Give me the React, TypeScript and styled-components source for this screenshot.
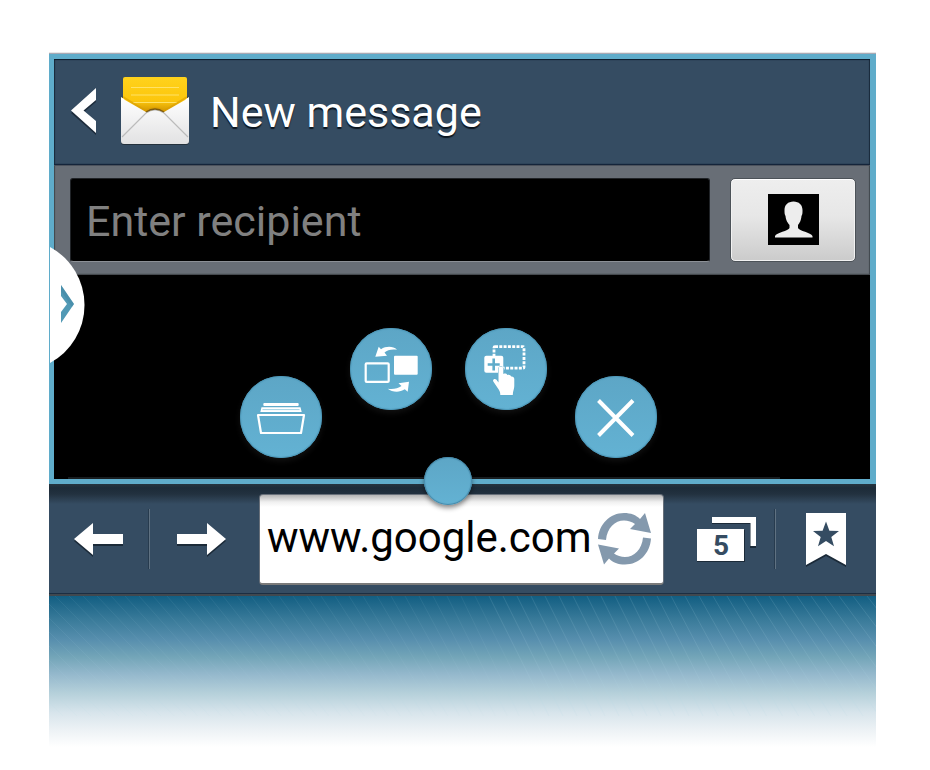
import React from "react";
import styled, { createGlobalStyle } from "styled-components";

const GlobalStyle = createGlobalStyle`
  *, *::before, *::after { box-sizing: border-box; }
  body { margin: 0; background: #fff; font-family: Roboto, "Liberation Sans", sans-serif; }
  button, input { font: inherit; color: inherit; }
`;

const Screen = styled.main`
  padding: 52px 54px 16px 49px;
`;

const AppWindow = styled.section`
  position: relative;
  border: 5px solid #5facca;
  border-right-width: 6px;
  background: #000;
  box-shadow: 0 -1px 0 #a9a9b4, 0 -2px 0 #e8e8e8;
  margin-top: 2px;
`;

const TitleBar = styled.header`
  display: flex;
  align-items: center;
  height: 106px;
  padding: 0 17px 2px;
  background: #354c62;
  border-bottom: 1px solid #14243a;
  box-shadow: inset 0 1px 1px #0b1a28, inset 1px 0 1px #1a2c3d, inset -1px 0 1px #1a2c3d;
`;

const PlainButton = styled.button`
  display: flex;
  align-items: center;
  justify-content: center;
  padding: 0;
  border: 0;
  background: none;
  cursor: pointer;

  svg { display: block; }
`;

const BackButton = styled(PlainButton)`
  margin-right: 24px;
`;

const Title = styled.h1`
  margin: 0 0 0 21px;
  padding-top: 2px;
  font-size: 43px;
  line-height: 52px;
  font-weight: 400;
  color: #fff;
  text-shadow: 0 2px 1px #0c1620;
  white-space: nowrap;
`;

const RecipientBar = styled.div`
  display: flex;
  gap: 20px;
  height: 110px;
  padding: 13px 14px 12px 16px;
  background: #686e76;
  box-shadow: inset 0 1px 0 #4c525c, inset 1px 0 1px #40464d, inset -1px 0 1px #40464d;
  border-bottom: 1px solid #45494e;
`;

const RecipientInput = styled.input`
  flex: 1;
  min-width: 0;
  padding: 2px 15px 0;
  border: 1px solid #202327;
  border-bottom: 1px solid #8c9096;
  border-radius: 3px;
  background: #000;
  color: #fff;
  font-size: 43px;
  outline: none;

  &::placeholder { color: #808080; opacity: 1; }
`;

const ContactButton = styled(PlainButton)`
  flex: 0 0 126px;
  padding-bottom: 2px;
  border: 1px solid #4c5258;
  border-radius: 5px;
  background: linear-gradient(#eeeeee, #e7e7e7 45%, #cbcbcb);
  box-shadow: inset 0 1px 0 #fff, inset 0 0 0 1px #f2f2f2;
`;

const MessageArea = styled.div`
  height: 204px;
  padding: 53px 27px 0 0;
`;

const ActionArc = styled.div`
  display: flex;
  justify-content: center;
  gap: 33px;
  height: 130px;
`;

const ArcHalf = styled.div`
  display: flex;
  gap: 28px;
`;

const RoundButton = styled(PlainButton)<{ $low?: boolean }>`
  width: 82px;
  height: 82px;
  border-radius: 50%;
  align-self: ${(p) => (p.$low ? "flex-end" : "flex-start")};
  background: linear-gradient(#5da6c6, #63b2d3);
  box-shadow: inset 0 0 1px 1px #4d98b9, 0 3px 6px rgba(90, 90, 90, 0.2);
`;

const FooterRule = styled.div`
  height: 2px;
  margin: 19px 63px 0 14px;
  background: #181d20;
`;

const DrawerHandle = styled(PlainButton)`
  position: absolute;
  left: -4px;
  top: 188px;
`;

const SplitKnob = styled.button`
  position: absolute;
  bottom: -26px;
  left: calc(50% - 14px);
  transform: translateX(-50%);
  width: 48px;
  height: 48px;
  padding: 0;
  border: 0;
  border-radius: 50%;
  background: linear-gradient(#5da6c6, #63b2d3);
  box-shadow: inset 0 0 1px 1px #4588a8, 0 3px 5px rgba(0, 0, 0, 0.45);
  z-index: 1;
  cursor: ns-resize;
`;

const BrowserBar = styled.nav`
  display: flex;
  align-items: stretch;
  height: 112px;
  background: linear-gradient(#26343f 0, #1c2b38 4px, #22313f 10px, #354c62 20px);
  border-bottom: 2px solid #40484f;
  box-shadow: inset 0 -1px 0 #1c2e42;
`;

const NavButton = styled(PlainButton)<{ $width: number; $shift?: "left" | "right" }>`
  flex: 0 0 ${(p) => p.$width}px;
  padding: ${(p) => (p.$shift === "left" ? "2px 6px 0 0" : p.$shift === "right" ? "2px 0 0 16px" : "2px 0 0")};
`;

const Separator = styled.span`
  flex: 0 0 2px;
  margin: 25px 0;
  border-left: 1px solid #273b4e;
  border-right: 1px solid #5f7181;
`;

const AddressField = styled.div`
  flex: 1;
  min-width: 0;
  display: flex;
  align-items: center;
  margin: 10px 0 9px;
  padding: 0 12px 0 7px;
  border: 1px solid #68707a;
  border-bottom: 2px solid #7b7b7b;
  border-radius: 4px;
  background: linear-gradient(#b4b4b4 0, #f0f0f0 7px, #fff 12px);
`;

const AddressInput = styled.input`
  flex: 1;
  min-width: 0;
  padding: 0 0 4px;
  border: 0;
  background: none;
  color: #000;
  font-size: 42px;
  outline: none;
`;

const PageBackdrop = styled.div`
  height: 154px;
  overflow: hidden;
  background: linear-gradient(
    #125e82 0, #3a7b9a 24px, #588fae 44px, #73a5b8 61px, #94b8cc 78px,
    #b5d0da 97px, #d8e5ec 117px, #edf2f5 134px, #fff 151px
  );

  svg { display: block; width: 100%; height: 100%; }
`;

const streaks = Array.from({ length: 70 }, (_, i) => {
  const x = -120 + i * 14;
  const slope = x < 420 ? 1 - Math.max(x, 0) / 800 : 0.5 + Math.max(x - 600, 0) / 800;
  return { x, end: x + slope * 120, opacity: x > 430 ? 0.14 : 0.08 };
});

function Chevron() {
  return (
    <svg width="26" height="50" viewBox="0 0 26 50">
      <path d="M25 5V16L12 27L25 38V49L0 27Z" fill="#14202c" opacity=".7" />
      <path d="M25 2V14L12.500 24.500L25 35V47L0 24.500Z" fill="#fff" />
    </svg>
  );
}

function Envelope() {
  return (
    <svg width="68" height="70" viewBox="0 0 68 70">
      <defs>
        <linearGradient id="paper" x1="0" y1="0" x2="0" y2="1">
          <stop offset="0" stopColor="#ffd21c" />
          <stop offset=".65" stopColor="#fcc60c" />
          <stop offset="1" stopColor="#c98b00" />
        </linearGradient>
        <linearGradient id="cover" x1="0" y1="0" x2="0" y2="1">
          <stop offset="0" stopColor="#fff" />
          <stop offset="1" stopColor="#e2e2e3" />
        </linearGradient>
      </defs>
      <path d="M0 22L3 20H65L68 22V66Q68 69 65 69H3Q0 69 0 66Z" fill="#24313c" />
      <path d="M2 3Q2 1 4 1H64Q66 1 66 3V38H2Z" fill="url(#paper)" />
      <path d="M10 11.500H58M10 19H58M12 26.500H56" stroke="#ffe267" strokeWidth="1" />
      <path d="M2 21L25 35Q34 29 43 35L66 21" fill="none" stroke="#d99d00" strokeWidth="2" opacity=".6" />
      <path d="M0 21Q2 22 4 24L25 36Q34 30 43 36L64 24Q66 22 68 21V65Q68 68 65 68H3Q0 68 0 65Z" fill="url(#cover)" />
      <path d="M1 61L25 37Q34 31 43 37L67 61" fill="none" stroke="#bbb" strokeWidth="1.200" />
      <path d="M25 36Q34 30 43 36" fill="none" stroke="#7d5b10" strokeWidth="1.500" />
    </svg>
  );
}

function Person() {
  return (
    <svg width="51" height="51" viewBox="0 0 51 51">
      <rect width="51" height="51" fill="#000" />
      <path
        d="M25.500 7.500C31 7.500 34.500 11 34.500 16C34.500 19 34.500 20 33.500 22C33 27 31.500 29 30 31V34C31 37 43 38.500 44.500 42V43.500H7V42C8.500 38.500 20.500 37 21.500 34V31C20 29 18 27 17.500 22C16.500 20 16.500 19 16.500 16C16.500 11 20 7.500 25.500 7.500Z"
        fill="#ededed"
      />
    </svg>
  );
}

function HandleShape() {
  return (
    <svg width="36" height="116" viewBox="0 0 36 116">
      <path d="M0 0A66 66 0 0 1 0 116Z" fill="#fff" />
      <path d="M11 38L24 57L11 76V65L17 57L11 49Z" fill="#5199b5" />
      <path d="M11 38L24 57L22 60L11 44Z" fill="#3b7f9b" opacity=".35" />
    </svg>
  );
}

function TrayIcon() {
  return (
    <svg width="82" height="82" viewBox="0 0 82 82">
      <rect x="23.300" y="27" width="35.400" height="3" rx="1" fill="#fff" />
      <path d="M21.500 31.300H60.500L61.700 36H20.300Z" fill="#fff" />
      <path d="M22.500 33.600H59.500" stroke="#8cc5dc" strokeWidth=".8" />
      <path d="M18 39H64L61 57H21Z" fill="none" stroke="#fff" strokeWidth="2.200" strokeLinejoin="round" />
    </svg>
  );
}

function SwapIcon() {
  return (
    <svg width="82" height="82" viewBox="0 0 82 82">
      <rect x="15.700" y="35.300" width="23" height="18.600" rx="1" fill="none" stroke="#fff" strokeWidth="2.200" />
      <rect x="44" y="27.700" width="23.700" height="19" rx="1" fill="#fff" />
      <path d="M25.300 28.700L28.700 18.700L31 21.300C36 18 43 18 47 21.700C41 21 37.500 22 34.500 24.500L37 27.700Z" fill="#fff" />
      <path d="M59 53.700L57.700 63.700L54.800 61.300C49 65 42 64 37.700 60.700C43 61.500 48 60.500 51.500 58L48.500 55.300Z" fill="#fff" />
    </svg>
  );
}

function PickIcon() {
  return (
    <svg width="82" height="82" viewBox="0 0 82 82">
      <rect x="29" y="18.600" width="30" height="21.600" rx="1" fill="none" stroke="#fff" strokeWidth="2.800" strokeDasharray="3 1.300" />
      <rect x="19.300" y="27.700" width="19" height="17" rx="2" fill="#fff" />
      <path d="M28.700 30.500V42.500M22.700 36.500H34.700" stroke="#5facca" strokeWidth="2.600" />
      <path
        d="M33.500 41C33.500 37.800 38.300 37.800 38.300 41V46C40 45.200 41.500 45.500 42.300 47C44 46.200 45.500 47 46.200 48.500C48 48.300 49.300 49.200 49.300 51V58C49.300 61 47.800 63 47.800 67H35.300C35.300 64 34.500 62.500 33 60.500L28.300 53.500C27.300 51.500 29.600 50 31.300 51.500L33.500 54.500Z"
        fill="#fff" stroke="#5facca" strokeWidth="1" paintOrder="stroke"
      />
    </svg>
  );
}

function CloseIcon() {
  return (
    <svg width="82" height="82" viewBox="0 0 82 82">
      <path d="M23.500 24.500L58 59.500M58 24.500L23.500 59.500" stroke="#fff" strokeWidth="4" />
    </svg>
  );
}

function ArrowIcon({ forward }: { forward?: boolean }) {
  const d = forward ? "M0 12H30V1L49 17L30 33V22H0Z" : "M49 12H19V1L0 17L19 33V22H49Z";
  return (
    <svg width="49" height="36" viewBox="0 0 49 36">
      <path d={d} transform="translate(0 2)" fill="#1b2a38" />
      <path d={d} fill="#fff" />
    </svg>
  );
}

function ReloadIcon() {
  const half = "M0 26C1 11 12 0 26 0C33 0 38 2 42 6L47 0L53 20L32 16L37 11C34 9 30 7.500 26 7.500C17 7.500 9 15 8 27Z";
  return (
    <svg width="53" height="52" viewBox="0 0 53 52" fill="#8499ad">
      <path d={half} />
      <path d={half} transform="rotate(180 26.500 25.700)" />
    </svg>
  );
}

const TabCount = styled.text`
  font-family: Roboto, "Liberation Sans", sans-serif;
  font-size: 28px;
  font-weight: 700;
  fill: #354c62;
`;

function TabsIcon() {
  return (
    <svg width="60" height="50" viewBox="0 0 60 50">
      <path d="M15 3H59V33H53V9H15Z M0 15H48V47H0Z" fill="#1b2a38" />
      <path d="M15 2H59V31H53.500V8H15Z M0 14H47V46H0Z" fill="#fff" />
      <TabCount x="24" y="40" textAnchor="middle">5</TabCount>
    </svg>
  );
}

function BookmarkIcon() {
  return (
    <svg width="40" height="54" viewBox="0 0 40 54">
      <path d="M0 2H40V54L20 43L0 54Z" fill="#1b2a38" />
      <path d="M0 0H40V52L20 41L0 52Z" fill="#fff" />
      <path d="M20 8.500L23.400 17.800L33 18L25.300 24L28 33.300L20 28L12 33.300L14.700 24L7 18L16.600 17.800Z" fill="#354c62" />
    </svg>
  );
}

export default function App() {
  return (
    <>
      <GlobalStyle />
      <Screen>
        <AppWindow aria-label="Messaging">
          <TitleBar>
            <BackButton aria-label="Back"><Chevron /></BackButton>
            <Envelope />
            <Title>New message</Title>
          </TitleBar>
          <RecipientBar>
            <RecipientInput aria-label="Recipient" placeholder="Enter recipient" />
            <ContactButton aria-label="Choose contact"><Person /></ContactButton>
          </RecipientBar>
          <MessageArea>
            <ActionArc role="toolbar" aria-label="Window actions">
              <ArcHalf>
                <RoundButton $low aria-label="Open app tray"><TrayIcon /></RoundButton>
                <RoundButton aria-label="Swap windows"><SwapIcon /></RoundButton>
              </ArcHalf>
              <ArcHalf>
                <RoundButton aria-label="Drag content"><PickIcon /></RoundButton>
                <RoundButton $low aria-label="Close window"><CloseIcon /></RoundButton>
              </ArcHalf>
            </ActionArc>
            <FooterRule />
          </MessageArea>
          <DrawerHandle aria-label="Open drawer"><HandleShape /></DrawerHandle>
          <SplitKnob aria-label="Resize windows" />
        </AppWindow>
        <BrowserBar aria-label="Browser">
          <NavButton $width={99} aria-label="Previous page"><ArrowIcon /></NavButton>
          <Separator />
          <NavButton $width={109} $shift="left" aria-label="Next page"><ArrowIcon forward /></NavButton>
          <AddressField>
            <AddressInput aria-label="Address" defaultValue="www.google.com" />
            <PlainButton aria-label="Reload"><ReloadIcon /></PlainButton>
          </AddressField>
          <NavButton $width={110} $shift="right" aria-label="Open tabs"><TabsIcon /></NavButton>
          <Separator />
          <NavButton $width={100} aria-label="Bookmarks"><BookmarkIcon /></NavButton>
        </BrowserBar>
        <PageBackdrop>
          <svg viewBox="0 0 827 154" preserveAspectRatio="none" aria-hidden="true">
            {streaks.map((s) => (
              <line key={s.x} x1={s.x} y1="0" x2={s.end} y2="120" stroke="#b4dbe8" strokeWidth="1" opacity={s.opacity} />
            ))}
          </svg>
        </PageBackdrop>
      </Screen>
    </>
  );
}
